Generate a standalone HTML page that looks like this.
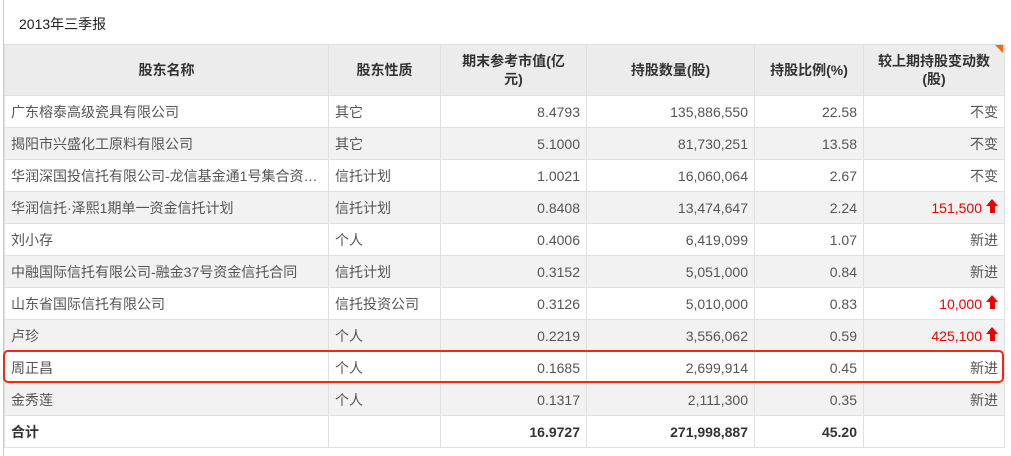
<!DOCTYPE html>
<html><head><meta charset="utf-8"><style>
body{margin:0;width:1011px;height:456px;background:#fff;font-family:"Liberation Sans","Noto Sans CJK SC",sans-serif;position:relative;overflow:hidden;color:#333}
.lb{position:absolute;left:3px;top:0;width:1px;height:456px;background:#ccc}
.title{position:absolute;left:19px;top:14px;font-size:14px;color:#222}
table{position:absolute;left:4px;top:44px;border-collapse:collapse;font-size:14px;table-layout:fixed}
td,th{border:1px solid #e0e0e0;height:31px;padding:0 6px;color:#555;white-space:nowrap;overflow:hidden}
th{background:#ececec;color:#333;font-weight:bold;height:50px;line-height:18px;font-size:14px}
tr:nth-child(odd) td{background:#f2f2f2}
tr.w td{background:#fff!important}
td.r{text-align:right}
.red{color:#e00}
.up{display:inline-block;width:0;height:0;border-left:6px solid transparent;border-right:6px solid transparent;border-bottom:7px solid #e00;position:relative;top:-7px;margin-left:4px}
.up::after{content:"";position:absolute;left:-2.5px;top:7px;width:5px;height:7px;background:#e00}
.tot td{font-weight:bold;color:#333}
.box{position:absolute;left:3px;top:350px;width:997px;height:29px;border:2px solid #f02a10;border-radius:5px}
.tri{position:absolute;left:995px;top:45px;width:0;height:0;border-top:8px solid #f60;border-left:8px solid transparent}
</style></head><body>
<div class="lb"></div>
<div class="title">2013年三季报</div>
<table>
<colgroup><col style="width:324px"><col style="width:112px"><col style="width:146px"><col style="width:168px"><col style="width:109px"><col style="width:141px"></colgroup>
<tr><th>股东名称</th><th>股东性质</th><th>期末参考市值(亿<br>元)</th><th>持股数量(股)</th><th>持股比例(%)</th><th>较上期持股变动数<br>(股)</th></tr>
<tr class="w"><td>广东榕泰高级瓷具有限公司</td><td>其它</td><td class="r">8.4793</td><td class="r">135,886,550</td><td class="r">22.58</td><td class="r">不变</td></tr>
<tr><td>揭阳市兴盛化工原料有限公司</td><td>其它</td><td class="r">5.1000</td><td class="r">81,730,251</td><td class="r">13.58</td><td class="r">不变</td></tr>
<tr class="w"><td>华润深国投信托有限公司-龙信基金通1号集合资…</td><td>信托计划</td><td class="r">1.0021</td><td class="r">16,060,064</td><td class="r">2.67</td><td class="r">不变</td></tr>
<tr><td>华润信托·泽熙1期单一资金信托计划</td><td>信托计划</td><td class="r">0.8408</td><td class="r">13,474,647</td><td class="r">2.24</td><td class="r red">151,500<span class="up"></span></td></tr>
<tr class="w"><td>刘小存</td><td>个人</td><td class="r">0.4006</td><td class="r">6,419,099</td><td class="r">1.07</td><td class="r">新进</td></tr>
<tr><td>中融国际信托有限公司-融金37号资金信托合同</td><td>信托计划</td><td class="r">0.3152</td><td class="r">5,051,000</td><td class="r">0.84</td><td class="r">新进</td></tr>
<tr class="w"><td>山东省国际信托有限公司</td><td>信托投资公司</td><td class="r">0.3126</td><td class="r">5,010,000</td><td class="r">0.83</td><td class="r red">10,000<span class="up"></span></td></tr>
<tr><td>卢珍</td><td>个人</td><td class="r">0.2219</td><td class="r">3,556,062</td><td class="r">0.59</td><td class="r red">425,100<span class="up"></span></td></tr>
<tr class="w"><td>周正昌</td><td>个人</td><td class="r">0.1685</td><td class="r">2,699,914</td><td class="r">0.45</td><td class="r">新进</td></tr>
<tr><td>金秀莲</td><td>个人</td><td class="r">0.1317</td><td class="r">2,111,300</td><td class="r">0.35</td><td class="r">新进</td></tr>
<tr class="w tot"><td>合计</td><td></td><td class="r">16.9727</td><td class="r">271,998,887</td><td class="r">45.20</td><td></td></tr>
</table>
<div class="tri"></div>
<div class="box"></div>
</body></html>
